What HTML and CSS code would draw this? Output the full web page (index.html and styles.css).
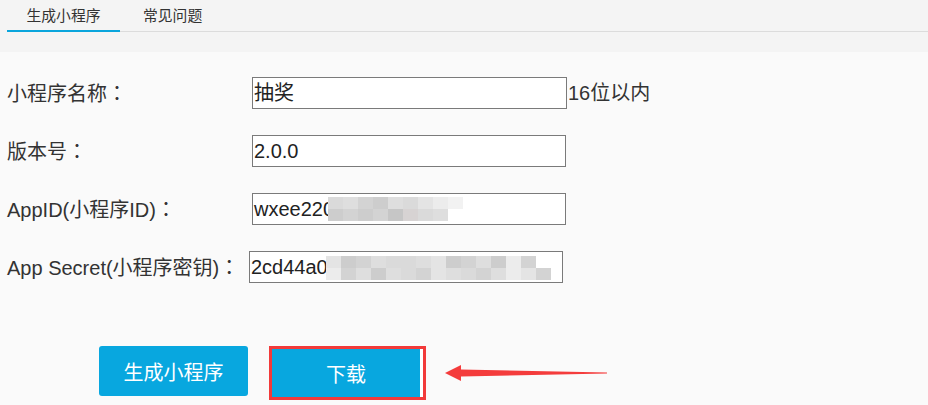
FILE: index.html
```html
<!DOCTYPE html>
<html lang="zh-CN">
<head>
<meta charset="utf-8">
<title>生成小程序</title>
<link rel="stylesheet" href="styles.css">
</head>
<body>
<div class="tabbar">
  <div class="tabs">
    <div class="tab active">生成小程序</div>
    <div class="tab">常见问题</div>
  </div>
</div>
<div class="content">
  <div class="form">
    <div class="row">
      <div class="label">小程序名称<span class="colon" lang="ja">：</span></div>
      <div class="field wide">抽奖</div>
      <div class="hint">16位以内</div>
    </div>
    <div class="row">
      <div class="label">版本号<span class="colon" lang="ja">：</span></div>
      <div class="field">2.0.0</div>
    </div>
    <div class="row">
      <div class="label">AppID(小程序ID)<span class="colon" lang="ja">：</span></div>
      <div class="field">wxee2201
        <span class="mosaic m-id">
          <i class="c3"></i><i class="c2"></i><i class="c4"></i><i class="c5"></i><i class="c2"></i><i class="c3"></i><i class="c1"></i><i class="c0"></i><i class="c8"></i><i class="cx"></i>
          <i class="c5"></i><i class="c4"></i><i class="c5"></i><i class="c4"></i><i class="c6"></i><i class="c7"></i><i class="c3"></i><i class="c2"></i><i class="cx"></i><i class="cx"></i>
        </span>
      </div>
    </div>
    <div class="row">
      <div class="label narrow">App Secret(小程序密钥)<span class="colon" lang="ja">：</span></div>
      <div class="field">2cd44a01..
        <span class="mosaic m-secret">
          <i class="c1"></i><i class="c5"></i><i class="c4"></i><i class="c2"></i><i class="c3"></i><i class="c3"></i><i class="c2"></i><i class="c1"></i><i class="c5"></i><i class="c4"></i><i class="c2"></i><i class="c5"></i><i class="c0"></i><i class="c4"></i><i class="cx"></i><i class="cx"></i>
          <i class="c0"></i><i class="c4"></i><i class="c2"></i><i class="c5"></i><i class="c2"></i><i class="c3"></i><i class="c4"></i><i class="c1"></i><i class="c2"></i><i class="c3"></i><i class="c4"></i><i class="c2"></i><i class="c0"></i><i class="c1"></i><i class="c4"></i><i class="cx"></i>
        </span>
      </div>
    </div>
  </div>
  <div class="actions">
    <button class="btn">生成小程序</button>
    <div class="highlight">
      <button class="btn btn-download">下载</button>
    </div>
    <svg class="arrow" width="162" height="16" viewBox="0 0 162 16">
      <polygon points="0,8 16,0 16,4.5 162,7.4 162,8.4 16,11.5 16,16" fill="#f43c3c"/>
    </svg>
  </div>
</div>
</body>
</html>
```

FILE: styles.css
```css
html, body {
  margin: 0;
  padding: 0;
}
body {
  width: 928px;
  height: 405px;
  overflow: hidden;
  background: #fafafa;
  color: #333333;
  font-family: "Liberation Sans", "Noto Sans CJK SC", sans-serif;
}
.tabbar {
  height: 52px;
  background: #f4f4f4;
  padding-left: 7px;
  box-sizing: border-box;
}
.tabs {
  display: flex;
  border-bottom: 1px solid #dcdcdc;
}
.tab {
  height: 30px;
  line-height: 30px;
  font-size: 14.8px;
  font-family: "Noto Sans CJK SC", sans-serif;
  color: #333333;
  padding: 0 23px;
  border-bottom: 2px solid transparent;
  margin-bottom: -1px;
}
.tab.active {
  width: 113px;
  padding: 0;
  text-align: center;
  border-bottom-color: #0aa5dc;
}
.content {
  padding: 25px 0 0 7px;
}
.form {
  display: flex;
  flex-direction: column;
  gap: 26px;
}
.row {
  display: flex;
  align-items: center;
  height: 32px;
}
.label {
  width: 245px;
  font-size: 20px;
  line-height: 32px;
  white-space: nowrap;
}
.label.narrow {
  width: 242px;
}
.colon {
  display: inline-block;
  width: 20px;
  text-align: center;
  font-family: "Noto Sans CJK JP", sans-serif;
}
.field {
  position: relative;
  width: 314px;
  height: 32px;
  box-sizing: border-box;
  border: 1px solid #7a7a7a;
  background: #ffffff;
  font-size: 20px;
  line-height: 30px;
  padding: 0 1px;
  white-space: nowrap;
  overflow: hidden;
  color: #222222;
}
.field.wide {
  width: 315px;
}
.hint {
  font-size: 20px;
  line-height: 32px;
  margin-left: 1px;
}
.mosaic {
  position: absolute;
  display: grid;
  grid-auto-rows: 12px;
}
.mosaic i {
  display: block;
}
.m-id {
  left: 75px;
  top: 3px;
  grid-template-columns: repeat(10, 15px);
  border-radius: 8px 0 0 8px;
}
.m-secret {
  left: 76px;
  top: 4px;
  grid-template-columns: repeat(16, 15px);
  border-radius: 8px 0 0 8px;
}
.c0 { background: #ececec; }
.c1 { background: #e4e4e4; }
.c2 { background: #dedede; }
.c3 { background: #dadada; }
.c4 { background: #d3d3d3; }
.c5 { background: #cdcdcd; }
.c6 { background: #c6c6c6; }
.c7 { background: #d7d3d3; }
.c8 { background: #f2f2f2; }
.cx { background: transparent; }
.actions {
  display: flex;
  align-items: flex-start;
  margin-top: 63px;
  padding-left: 92px;
}
.btn {
  width: 149px;
  height: 50px;
  border: none;
  border-radius: 3px;
  background: #08a7df;
  color: #ffffff;
  font-size: 20px;
  font-family: "Noto Sans CJK SC", sans-serif;
  padding: 0;
  margin: 0;
}
.highlight {
  margin-left: 21px;
  border: 3px solid #f23a3a;
  padding-right: 3px;
  background: #ffffff;
  display: flex;
}
.btn-download {
  width: 148px;
  height: 48px;
  border-radius: 0;
}
.arrow {
  display: block;
  margin-left: 19px;
  margin-top: 19px;
}
```
